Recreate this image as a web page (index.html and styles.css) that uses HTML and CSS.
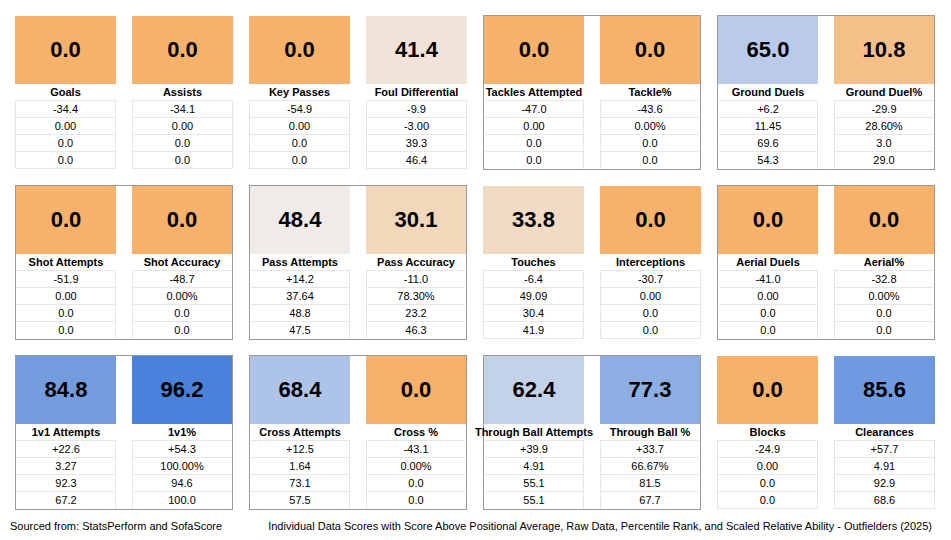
FILE: index.html
```html
<!DOCTYPE html>
<html lang="en">
<head>
<meta charset="utf-8">
<title>Individual Data Scores - Outfielders (2025)</title>
<link rel="stylesheet" href="styles.css">
</head>
<body>
<div class="wrap">
<main class="board">

  <!-- Row 1 -->
  <section class="group plain">
    <div class="stat">
      <div class="tile" style="background:#F6B26B">0.0</div>
      <div class="label"><span>Goals</span></div>
      <div class="tbl"><div class="cell">-34.4</div><div class="cell">0.00</div><div class="cell">0.0</div><div class="cell">0.0</div></div>
    </div>
    <div class="stat">
      <div class="tile" style="background:#F6B26B">0.0</div>
      <div class="label"><span>Assists</span></div>
      <div class="tbl"><div class="cell">-34.1</div><div class="cell">0.00</div><div class="cell">0.0</div><div class="cell">0.0</div></div>
    </div>
  </section>

  <section class="group plain">
    <div class="stat">
      <div class="tile" style="background:#F6B26B">0.0</div>
      <div class="label"><span>Key Passes</span></div>
      <div class="tbl"><div class="cell">-54.9</div><div class="cell">0.00</div><div class="cell">0.0</div><div class="cell">0.0</div></div>
    </div>
    <div class="stat">
      <div class="tile" style="background:#F0E4D8">41.4</div>
      <div class="label"><span>Foul Differential</span></div>
      <div class="tbl"><div class="cell">-9.9</div><div class="cell">-3.00</div><div class="cell">39.3</div><div class="cell">46.4</div></div>
    </div>
  </section>

  <section class="group boxed">
    <div class="stat">
      <div class="tile" style="background:#F6B26B">0.0</div>
      <div class="label"><span>Tackles Attempted</span></div>
      <div class="tbl"><div class="cell">-47.0</div><div class="cell">0.00</div><div class="cell">0.0</div><div class="cell">0.0</div></div>
    </div>
    <div class="stat">
      <div class="tile" style="background:#F6B26B">0.0</div>
      <div class="label"><span>Tackle%</span></div>
      <div class="tbl"><div class="cell">-43.6</div><div class="cell">0.00%</div><div class="cell">0.0</div><div class="cell">0.0</div></div>
    </div>
  </section>

  <section class="group boxed">
    <div class="stat">
      <div class="tile" style="background:#B9CBE8">65.0</div>
      <div class="label"><span>Ground Duels</span></div>
      <div class="tbl"><div class="cell">+6.2</div><div class="cell">11.45</div><div class="cell">69.6</div><div class="cell">54.3</div></div>
    </div>
    <div class="stat">
      <div class="tile" style="background:#F5BF88">10.8</div>
      <div class="label"><span>Ground Duel%</span></div>
      <div class="tbl"><div class="cell">-29.9</div><div class="cell">28.60%</div><div class="cell">3.0</div><div class="cell">29.0</div></div>
    </div>
  </section>

  <!-- Row 2 -->
  <section class="group boxed">
    <div class="stat">
      <div class="tile" style="background:#F6B26B">0.0</div>
      <div class="label"><span>Shot Attempts</span></div>
      <div class="tbl"><div class="cell">-51.9</div><div class="cell">0.00</div><div class="cell">0.0</div><div class="cell">0.0</div></div>
    </div>
    <div class="stat">
      <div class="tile" style="background:#F6B26B">0.0</div>
      <div class="label"><span>Shot Accuracy</span></div>
      <div class="tbl"><div class="cell">-48.7</div><div class="cell">0.00%</div><div class="cell">0.0</div><div class="cell">0.0</div></div>
    </div>
  </section>

  <section class="group boxed">
    <div class="stat">
      <div class="tile" style="background:#EFEBE8">48.4</div>
      <div class="label"><span>Pass Attempts</span></div>
      <div class="tbl"><div class="cell">+14.2</div><div class="cell">37.64</div><div class="cell">48.8</div><div class="cell">47.5</div></div>
    </div>
    <div class="stat">
      <div class="tile" style="background:#F2D7BA">30.1</div>
      <div class="label"><span>Pass Accuracy</span></div>
      <div class="tbl"><div class="cell">-11.0</div><div class="cell">78.30%</div><div class="cell">23.2</div><div class="cell">46.3</div></div>
    </div>
  </section>

  <section class="group plain">
    <div class="stat">
      <div class="tile" style="background:#F1DBC4">33.8</div>
      <div class="label"><span>Touches</span></div>
      <div class="tbl"><div class="cell">-6.4</div><div class="cell">49.09</div><div class="cell">30.4</div><div class="cell">41.9</div></div>
    </div>
    <div class="stat">
      <div class="tile" style="background:#F6B26B">0.0</div>
      <div class="label"><span>Interceptions</span></div>
      <div class="tbl"><div class="cell">-30.7</div><div class="cell">0.00</div><div class="cell">0.0</div><div class="cell">0.0</div></div>
    </div>
  </section>

  <section class="group boxed">
    <div class="stat">
      <div class="tile" style="background:#F6B26B">0.0</div>
      <div class="label"><span>Aerial Duels</span></div>
      <div class="tbl"><div class="cell">-41.0</div><div class="cell">0.00</div><div class="cell">0.0</div><div class="cell">0.0</div></div>
    </div>
    <div class="stat">
      <div class="tile" style="background:#F6B26B">0.0</div>
      <div class="label"><span>Aerial%</span></div>
      <div class="tbl"><div class="cell">-32.8</div><div class="cell">0.00%</div><div class="cell">0.0</div><div class="cell">0.0</div></div>
    </div>
  </section>

  <!-- Row 3 -->
  <section class="group boxed">
    <div class="stat">
      <div class="tile" style="background:#729CDF">84.8</div>
      <div class="label"><span>1v1 Attempts</span></div>
      <div class="tbl"><div class="cell">+22.6</div><div class="cell">3.27</div><div class="cell">92.3</div><div class="cell">67.2</div></div>
    </div>
    <div class="stat">
      <div class="tile" style="background:#4A81DA">96.2</div>
      <div class="label"><span>1v1%</span></div>
      <div class="tbl"><div class="cell">+54.3</div><div class="cell">100.00%</div><div class="cell">94.6</div><div class="cell">100.0</div></div>
    </div>
  </section>

  <section class="group boxed">
    <div class="stat">
      <div class="tile" style="background:#ADC3E7">68.4</div>
      <div class="label"><span>Cross Attempts</span></div>
      <div class="tbl"><div class="cell">+12.5</div><div class="cell">1.64</div><div class="cell">73.1</div><div class="cell">57.5</div></div>
    </div>
    <div class="stat">
      <div class="tile" style="background:#F6B26B">0.0</div>
      <div class="label"><span>Cross %</span></div>
      <div class="tbl"><div class="cell">-43.1</div><div class="cell">0.00%</div><div class="cell">0.0</div><div class="cell">0.0</div></div>
    </div>
  </section>

  <section class="group boxed">
    <div class="stat">
      <div class="tile" style="background:#C3D2E9">62.4</div>
      <div class="label"><span>Through Ball Attempts</span></div>
      <div class="tbl"><div class="cell">+39.9</div><div class="cell">4.91</div><div class="cell">55.1</div><div class="cell">55.1</div></div>
    </div>
    <div class="stat">
      <div class="tile" style="background:#8DAEE2">77.3</div>
      <div class="label"><span>Through Ball %</span></div>
      <div class="tbl"><div class="cell">+33.7</div><div class="cell">66.67%</div><div class="cell">81.5</div><div class="cell">67.7</div></div>
    </div>
  </section>

  <section class="group plain">
    <div class="stat">
      <div class="tile" style="background:#F6B26B">0.0</div>
      <div class="label"><span>Blocks</span></div>
      <div class="tbl"><div class="cell">-24.9</div><div class="cell">0.00</div><div class="cell">0.0</div><div class="cell">0.0</div></div>
    </div>
    <div class="stat">
      <div class="tile" style="background:#709ADF">85.6</div>
      <div class="label"><span>Clearances</span></div>
      <div class="tbl"><div class="cell">+57.7</div><div class="cell">4.91</div><div class="cell">92.9</div><div class="cell">68.6</div></div>
    </div>
  </section>

</main>
</div>
<footer class="footer">
  <span>Sourced from: StatsPerform and SofaScore</span>
  <span>Individual Data Scores with Score Above Positional Average, Raw Data, Percentile Rank, and Scaled Relative Ability - Outfielders (2025)</span>
</footer>
</body>
</html>
```

FILE: styles.css
```css
* {
  box-sizing: border-box;
}

html,
body {
  margin: 0;
  padding: 0;
  background: #ffffff;
}

body {
  width: 951px;
  height: 540px;
  overflow: hidden;
  font-family: "Liberation Sans", Arial, sans-serif;
  color: #000000;
}

.wrap {
  padding: 15px 0 0 15px;
}

.board {
  display: grid;
  grid-template-columns: repeat(4, 218px);
  column-gap: 16px;
  row-gap: 15px;
  align-items: start;
}

.group {
  display: grid;
  grid-template-columns: 100px 100px;
  column-gap: 16px;
  border: 1px solid #9a9a9a;
}

.group.plain {
  border: 0;
  padding-top: 1px;
  grid-template-columns: 101px 101px;
}

.stat {
  display: flex;
  flex-direction: column;
  min-width: 0;
}

.tile {
  height: 68px;
  display: flex;
  align-items: center;
  justify-content: center;
  font-size: 22px;
  font-weight: bold;
}

.label {
  height: 16px;
  display: flex;
  justify-content: center;
  font-size: 11px;
  font-weight: bold;
  line-height: 16px;
  white-space: nowrap;
}

.label span {
  flex: none;
}

.tbl {
  border-left: 1px solid #e6e6e6;
  border-right: 1px solid #e6e6e6;
  border-bottom: 1px solid #e6e6e6;
}

.boxed .stat:first-child .tbl {
  border-left-color: transparent;
}

.boxed .stat:last-child .tbl {
  border-right-color: transparent;
  border-bottom-color: transparent;
}

.boxed .stat:first-child .tbl {
  border-bottom-color: transparent;
}

.cell {
  height: 17px;
  border-top: 1px solid #e6e6e6;
  font-size: 11px;
  line-height: 16px;
  text-align: center;
}

.footer {
  display: flex;
  justify-content: space-between;
  margin-top: 10px;
  padding: 0 19px 0 10px;
  font-size: 11px;
  line-height: 13px;
  white-space: nowrap;
}
```
